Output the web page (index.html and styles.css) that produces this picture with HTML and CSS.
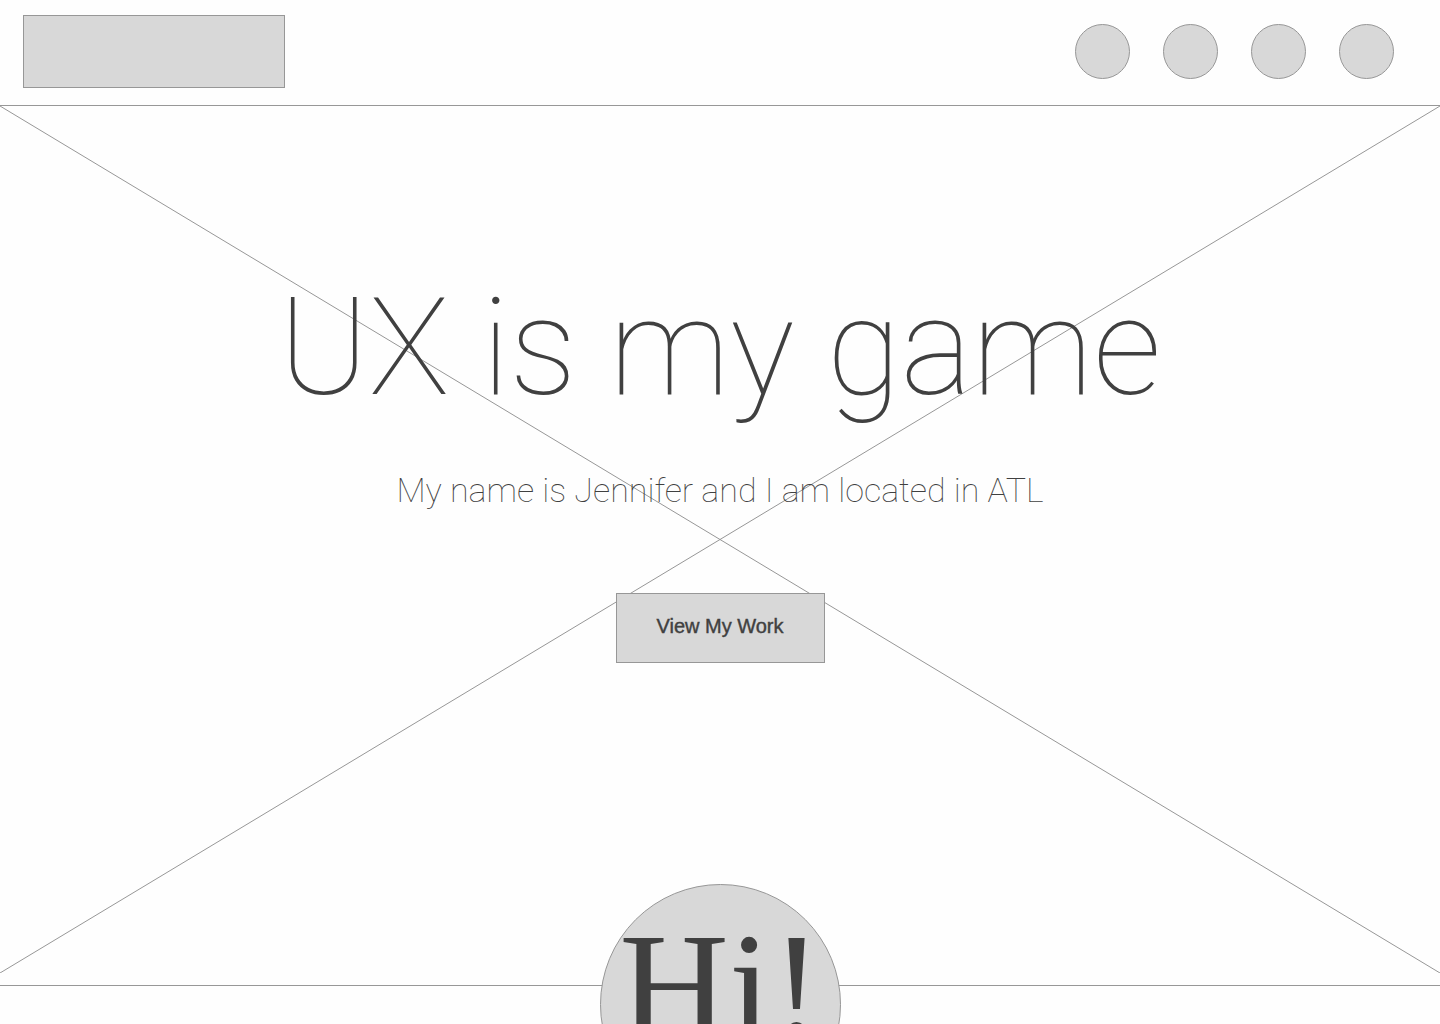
FILE: index.html
```html
<!DOCTYPE html>
<html lang="en">
<head>
<meta charset="utf-8">
<meta name="viewport" content="width=device-width, initial-scale=1">
<title>UX is my game</title>
<link rel="stylesheet" href="styles.css">
</head>
<body>
<header class="header">
  <a class="logo" href="#" aria-label="Home"></a>
  <nav class="social" aria-label="Social links">
    <a class="dot" href="#" aria-label="Social link 1"></a>
    <a class="dot" href="#" aria-label="Social link 2"></a>
    <a class="dot" href="#" aria-label="Social link 3"></a>
    <a class="dot" href="#" aria-label="Social link 4"></a>
  </nav>
</header>
<main class="hero">
  <svg class="cross" viewBox="0 0 100 100" preserveAspectRatio="none" aria-hidden="true">
    <path d="M0 0L100 100M100 0L0 100"/>
  </svg>
  <h1 class="title">UX is my game</h1>
  <p class="intro">My name is Jennifer and I am located in ATL</p>
  <button class="work" type="button">View My Work</button>
  <div class="hello">Hi!</div>
</main>
<section class="about" aria-label="About"></section>
</body>
</html>
```
FILE: styles.css
```css
* {
  box-sizing: border-box;
}

body {
  display: flex;
  flex-direction: column;
  height: 100vh;
  margin: 0;
  overflow: hidden;
  background: #fefefe;
  color: #404040;
  font-family: Roboto, "Liberation Sans", sans-serif;
}

.header {
  display: flex;
  align-items: center;
  justify-content: space-between;
  padding: 15px 46px 17px 23px;
  border-bottom: 1px solid #979797;
}

.logo {
  width: 262px;
  height: 73px;
  background: #d8d8d8;
  border: 1px solid #979797;
}

.social {
  display: flex;
  gap: 33px;
}

.dot {
  width: 55px;
  height: 55px;
  background: #d8d8d8;
  border: 1px solid #979797;
  border-radius: 50%;
}

.hero {
  position: relative;
  display: flex;
  flex: 1;
  flex-direction: column;
  align-items: center;
  padding-top: 156px;
  border-bottom: 1px solid #979797;
}

.cross {
  position: absolute;
  z-index: -1;
  top: 0;
  left: 0;
  width: 100%;
  height: calc(100% - 12px);
}

.cross path {
  fill: none;
  stroke: #979797;
  stroke-width: 1px;
  vector-effect: non-scaling-stroke;
}

.title {
  margin: 0;
  font-size: 135px;
  font-weight: 100;
  line-height: 172px;
  white-space: nowrap;
}

.intro {
  margin: 34px 0 0;
  font-size: 34px;
  font-weight: 100;
  line-height: 44px;
}

.work {
  width: 209px;
  height: 70px;
  margin-top: 81px;
  padding: 0 0 4px;
  background: #d8d8d8;
  border: 1px solid #979797;
  color: #404040;
  font-family: "Liberation Sans", Arial, sans-serif;
  font-size: 20px;
  -webkit-text-stroke: 0.4px #404040;
}

.hello {
  position: absolute;
  bottom: -140px;
  left: calc(50% - 120px);
  width: 241px;
  height: 241px;
  background: #d8d8d8;
  border: 1px solid #979797;
  border-radius: 50%;
  font-family: "Liberation Serif", "Times New Roman", serif;
  font-size: 152px;
  line-height: 204px;
  text-align: center;
}

.about {
  flex: 0 0 38px;
}
```
